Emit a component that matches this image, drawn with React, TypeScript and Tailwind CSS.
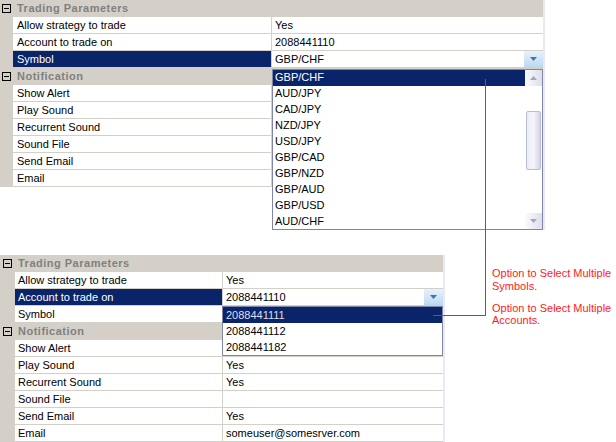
import React from "react";

type Row =
  | { kind: "cat"; label: string }
  | { kind: "prop"; label: string; value?: string; selected?: boolean; combo?: boolean };

const topRows: Row[] = [
  { kind: "cat", label: "Trading Parameters" },
  { kind: "prop", label: "Allow strategy to trade", value: "Yes" },
  { kind: "prop", label: "Account to trade on", value: "2088441110" },
  { kind: "prop", label: "Symbol", value: "GBP/CHF", selected: true, combo: true },
  { kind: "cat", label: "Notification" },
  { kind: "prop", label: "Show Alert" },
  { kind: "prop", label: "Play Sound" },
  { kind: "prop", label: "Recurrent Sound" },
  { kind: "prop", label: "Sound File" },
  { kind: "prop", label: "Send Email" },
  { kind: "prop", label: "Email" },
];

const bottomRows: Row[] = [
  { kind: "cat", label: "Trading Parameters" },
  { kind: "prop", label: "Allow strategy to trade", value: "Yes" },
  { kind: "prop", label: "Account to trade on", value: "2088441110", selected: true, combo: true },
  { kind: "prop", label: "Symbol" },
  { kind: "cat", label: "Notification" },
  { kind: "prop", label: "Show Alert" },
  { kind: "prop", label: "Play Sound", value: "Yes" },
  { kind: "prop", label: "Recurrent Sound", value: "Yes" },
  { kind: "prop", label: "Sound File" },
  { kind: "prop", label: "Send Email", value: "Yes" },
  { kind: "prop", label: "Email", value: "someuser@somesrver.com" },
];

const symbols = ["GBP/CHF", "AUD/JPY", "CAD/JPY", "NZD/JPY", "USD/JPY", "GBP/CAD", "GBP/NZD", "GBP/AUD", "GBP/USD", "AUD/CHF"];
const accounts = ["2088441111", "2088441112", "2088441182"];

function Expander() {
  return (
    <span className="w-[9px] h-[9px] border border-black flex items-center justify-center">
      <span className="w-[5px] h-px bg-black" />
    </span>
  );
}

function Arrow({ up, color }: { up?: boolean; color: string }) {
  return (
    <svg width="7" height="4" viewBox="0 0 7 4">
      {up ? <path d="M3.5 0 L7 4 L0 4 Z" fill={color} /> : <path d="M0 0 L7 0 L3.5 4 Z" fill={color} />}
    </svg>
  );
}

function ComboButton() {
  return (
    <div className="w-[19px] h-full bg-gradient-to-b from-[#e8f2fc] to-[#bcd9f0] flex items-center justify-center">
      <Arrow color="#3f75b0" />
    </div>
  );
}

function PropertyGrid({
  rows,
  gutter,
  label,
  value,
  textPad,
}: {
  rows: Row[];
  gutter: string;
  label: string;
  value: string;
  textPad: string;
}) {
  return (
    <div className="flex flex-col w-fit border-r-2 border-[#e8e8f8]">
      {rows.map((r, i) =>
        r.kind === "cat" ? (
          <div key={i} className="flex h-[17px] bg-[#d4d0c8] items-center">
            <div className={`${gutter} h-full flex items-center justify-center`}>
              <Expander />
            </div>
            <div className={`${textPad} font-bold text-[#808080] tracking-[0.5px]`}>{r.label}</div>
          </div>
        ) : (
          <div key={i} className="flex h-[17px]">
            <div className={`${gutter} h-full bg-[#d4d0c8]`} />
            <div
              className={`${label} ${textPad} h-full flex items-center border-b border-r border-[#d4d0c8] ${
                r.selected ? "bg-[#0a246a] text-white" : "bg-white text-black"
              }`}
            >
              {r.label}
            </div>
            <div className={`${value} h-full flex items-center border-b border-[#d4d0c8] bg-white`}>
              <span className="flex-1 pl-[3px]">{r.value}</span>
              {r.combo && <ComboButton />}
            </div>
          </div>
        )
      )}
    </div>
  );
}

function ScrollButton({ up }: { up?: boolean }) {
  return (
    <div className="h-[16px] bg-gradient-to-r from-[#fbfbfe] to-[#dedeea] flex items-center justify-center">
      <Arrow up={up} color="#a2a6bf" />
    </div>
  );
}

export default function App() {
  return (
    <div className="relative w-[616px] h-[442px] bg-white text-[11px] leading-[13px] font-['Liberation_Sans',Arial,sans-serif] overflow-hidden">
      <PropertyGrid rows={topRows} gutter="w-[13px]" label="w-[259px]" value="w-[271px]" textPad="pl-[4px]" />
      <div className="mt-[68px]">
        <PropertyGrid rows={bottomRows} gutter="w-[15px]" label="w-[208px]" value="w-[220px]" textPad="pl-[3px]" />
      </div>

      {/* symbol dropdown */}
      <div className="absolute left-[272px] top-[69px] w-[271px] h-[161px] border border-[#7f86aa] bg-white flex shadow-[2px_0_0_#e8e8f8]">
        <div className="flex-1 flex flex-col">
          {symbols.map((s, i) => (
            <div
              key={s}
              className={`h-[16px] pl-[2px] flex items-center ${i === 0 ? "bg-[#0a246a] text-white" : "text-black"}`}
            >
              {s}
            </div>
          ))}
        </div>
        <div className="w-[17px] flex flex-col">
          <ScrollButton up />
          <div className="flex-1 pt-[25px] px-[1px]">
            <div className="h-[59px] rounded-[2px] border border-[#b8bcd4] bg-gradient-to-r from-[#ececf6] via-[#f6f6fc] to-[#d4d4e4]" />
          </div>
          <ScrollButton />
        </div>
      </div>

      {/* account dropdown */}
      <div className="absolute left-[222px] top-[306px] w-[221px] h-[50px] border border-[#7f86aa] bg-white flex flex-col shadow-[2px_0_0_#e8e8f8]">
        {accounts.map((a, i) => (
          <div
            key={a}
            className={`h-[16px] pl-[3px] flex items-center ${i === 0 ? "bg-[#0a246a] text-[#dcdcec]" : "text-black"}`}
          >
            {a}
          </div>
        ))}
      </div>

      {/* annotation lines */}
      <div className="absolute left-[485px] top-[79px] w-px h-[236px] bg-[#ff1a1a]" />
      <div className="absolute left-[433px] top-[315px] w-[53px] h-px bg-[#ff1a1a]" />

      <div className="absolute left-[492px] top-[267px] text-[#ff1a1a]">
        Option to Select Multiple
        <br />
        Symbols.
      </div>
      <div className="absolute left-[492px] top-[302px] text-[#ff1a1a] leading-[12px]">
        Option to Select Multiple
        <br />
        Accounts.
      </div>
    </div>
  );
}
